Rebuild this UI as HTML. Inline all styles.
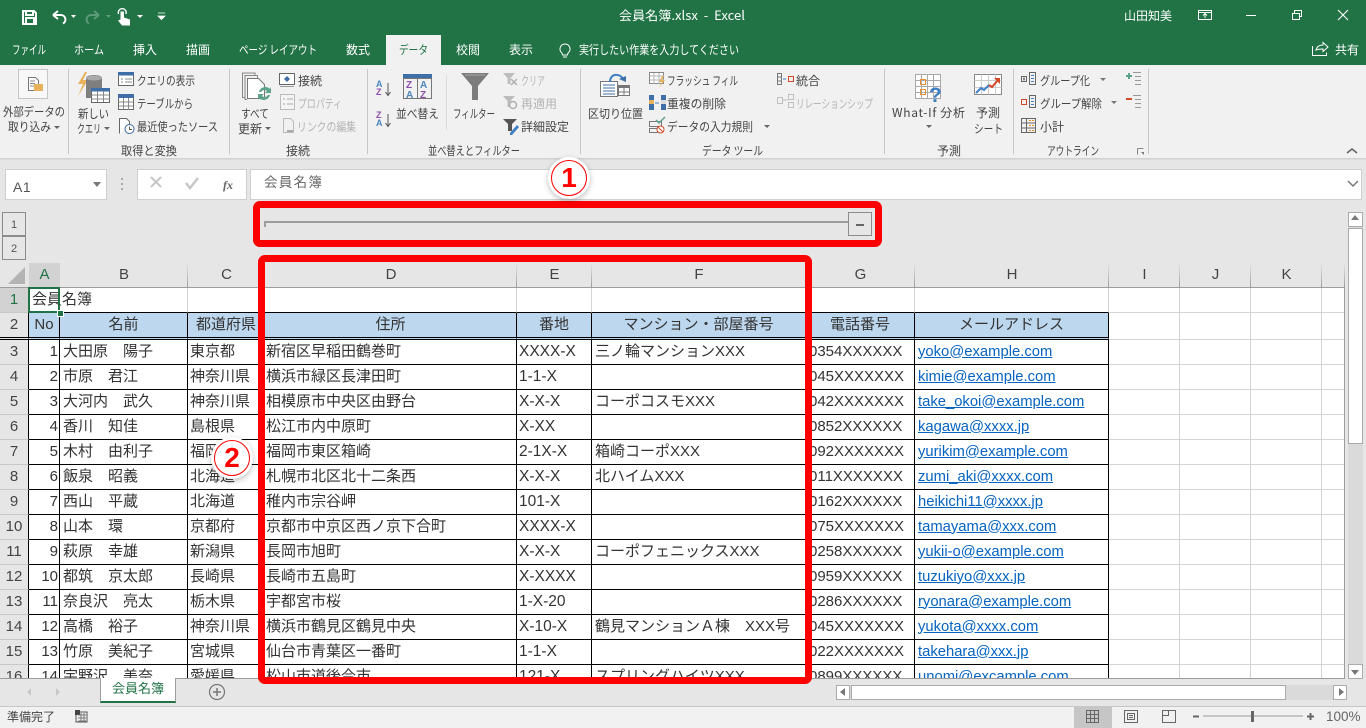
<!DOCTYPE html>
<html lang="ja"><head><meta charset="utf-8"><title>会員名簿.xlsx - Excel</title>
<style>
html,body{margin:0;padding:0;background:#e6e6e6}
body{width:1366px;height:728px;overflow:hidden;position:relative;font-family:"Liberation Sans","Noto Sans CJK JP",sans-serif}
.abs{position:absolute}
#top{position:absolute;left:0;top:0}
#top text{font-family:"Noto Sans CJK JP","Liberation Sans",sans-serif;font-size:12px;fill:#444;white-space:pre}
#top text.w{fill:#fff}
#top text.g{fill:#b4b4b4}
#top text.m{text-anchor:middle}
#sheet{position:absolute;left:0;top:263px;width:1345px;height:415px;overflow:hidden;background:#fff}
table{border-collapse:separate;border-spacing:0;table-layout:fixed;width:1345px;font-family:"Liberation Sans","Noto Sans CJK JP",sans-serif;font-size:15px;color:#333}
td,th{box-sizing:border-box;height:25px;padding:0 0 1px 3px;overflow:hidden;white-space:nowrap;font-weight:normal;text-align:left;border-right:1px solid #000;border-bottom:1px solid #000;line-height:22px}
td:nth-child(4){padding-left:2px}
td:nth-child(5){padding-left:1px}
td:nth-child(6){padding-left:2px}
tr>*:first-child{background:#e6e6e6;text-align:center;padding:0;font-size:15px;color:#444;border-right:1px solid #000;border-bottom:1px solid #c8c8c8}
tr.h th{background:linear-gradient(#e6e6e6,#9c9c9c) right top/1px 100% no-repeat,#e6e6e6;text-align:center;padding:0;border:0;border-bottom:1px solid #9c9c9c;color:#444;font-size:15px}
td.g{border-right:1px solid #d4d4d4;border-bottom:1px solid #d4d4d4}
td.b{border-bottom-color:#000}
td.n{text-align:right;padding:0 1px 1px 0}
td.l{font-size:15.5px}
td.p{font-size:15px}
td.a{font-size:14.8px;color:#0563c1;text-decoration:underline}
td.c{text-align:center;padding:0;background:#bdd7ee;letter-spacing:0}
tr.r2 td{height:27px;border-bottom:3px double #000;line-height:24px}
tr.r2 td.g{border-bottom:1px solid #d4d4d4}
.red{position:absolute;box-sizing:border-box;border:7px solid #f00;border-radius:7px}
.circ{position:absolute;width:34px;height:34px;border-radius:50%;background:#fff;border:1.5px solid #f00;box-shadow:0 0 0 3px #fff,0 2px 6px 3px rgba(0,0,0,.25);color:#f00;font:bold 28px/34px "Liberation Sans",sans-serif;text-align:center;box-sizing:content-box}
.box{position:absolute;box-sizing:border-box;background:#fff;border:1px solid #ababab}
</style></head><body>

<svg id="top" width="1366" height="728" viewBox="0 0 1366 728" xmlns="http://www.w3.org/2000/svg">
<rect width="1366" height="65" fill="#217346"/>
<rect x="386" y="35" width="55" height="31" fill="#f1f1f1"/>
<rect y="65" width="1366" height="93" fill="#f1f1f1"/>
<rect y="158" width="1366" height="1.5" fill="#d2d2d2"/>

<!-- QAT -->
<path d="M23 11h11l2 2v11H23zM26 11v4h7v-4M26 24v-6h8v6" fill="none" stroke="#fff" stroke-width="2"/>
<path d="M53 15l5-4M53 15l5 4M53 15h8a4.500 4.500 0 0 1 2 8.500" fill="none" stroke="#fff" stroke-width="2"/>
<path d="M71 15h5l-2.500 3z" fill="#fff"/>
<path d="M99 15l-5-4M99 15l-5 4M99 15h-8a4.500 4.500 0 0 0-2 8.500" fill="none" stroke="#5c9a7a" stroke-width="2"/>
<path d="M106 15h5l-2.500 3z" fill="#5c9a7a"/>
<path d="M120.500 11.500h3.500v6l6 2v6h-8l-4-5 2.500-1z" fill="#fff"/>
<path d="M118.500 14a4 4 0 1 1 7.500 0" fill="none" stroke="#fff" stroke-width="1.300"/>
<path d="M137 15h6l-3 3z" fill="#fff"/>
<path d="M158 13h7M158 16h7l-3.500 3.500z" fill="#fff" stroke="#fff" stroke-width=".8"/>

<!-- Title -->
<text class="w" x="619" y="20" style="font-size:12.500px" textLength="126" lengthAdjust="spacingAndGlyphs">会員名簿.xlsx  -  Excel</text>
<text class="w" x="1124" y="20">山田知美</text>
<path d="M1198.500 10.500h13v9h-13zM1198.500 12.500h13M1205 18v-4M1203 15.500l2-2 2 2" fill="none" stroke="#fff"/>
<path d="M1246 15.500h10" stroke="#fff"/>
<path d="M1292.500 13.500h7v6h-7zM1294.500 13.500v-3h7v6h-2" fill="none" stroke="#fff"/>
<path d="M1338 10l10 10M1348 10l-10 10" stroke="#fff" stroke-width="1.100"/>

<!-- Tabs -->
<text class="w" x="12" y="54" textLength="34" lengthAdjust="spacingAndGlyphs">ファイル</text>
<text class="w" x="74" y="54" textLength="30" lengthAdjust="spacingAndGlyphs">ホーム</text>
<text class="w" x="133" y="54">挿入</text>
<text class="w" x="186" y="54">描画</text>
<text class="w" x="239" y="54" textLength="78" lengthAdjust="spacingAndGlyphs">ページ レイアウト</text>
<text class="w" x="346" y="54">数式</text>
<text x="399" y="54" style="fill:#217346" textLength="29" lengthAdjust="spacingAndGlyphs">データ</text>
<text class="w" x="456" y="54">校閲</text>
<text class="w" x="509" y="54">表示</text>
<text class="w" x="579" y="54" textLength="160" lengthAdjust="spacingAndGlyphs">実行したい作業を入力してください</text>
<text class="w" x="1335" y="54">共有</text>
<path d="M565 44a5 5 0 0 1 3 9l-.5 2h-5l-.5-2a5 5 0 0 1 3-9zM563 57h4" fill="none" stroke="#fff"/>
<path d="M1312.500 46v9.500h14v-3M1316 50c1-4 4-5 7-5v-2.500l5 4.500-5 4.500V49c-3 0-5 0-7 1z" fill="none" stroke="#fff"/>

<!-- Group dividers -->
<g fill="#c6c6c6"><rect x="68" y="69" width="1" height="85"/><rect x="229" y="69" width="1" height="85"/><rect x="367" y="69" width="1" height="85"/><rect x="580" y="69" width="1" height="85"/><rect x="884" y="69" width="1" height="85"/><rect x="1013" y="69" width="1" height="85"/><rect x="1148" y="69" width="1" height="85"/><rect x="446" y="75" width="1" height="55" fill="#dcdcdc"/></g>

<!-- 外部データ -->
<rect x="18.500" y="69.500" width="29" height="29" fill="#f8f8f8" stroke="#c6c6c6"/>
<path d="M28.500 77.500h7l3 3v10h-10z" fill="#fff" stroke="#777"/>
<path d="M30 81h5M30 83.500h5M30 86h5" stroke="#888"/>
<path d="M34 84h9v7h-9z" fill="#e8b25c"/>
<text x="3" y="116" textLength="62" lengthAdjust="spacingAndGlyphs">外部データの</text>
<text x="8" y="131" textLength="43" lengthAdjust="spacingAndGlyphs">取り込み</text>
<path d="M54 126h6l-3 3z" fill="#666"/>

<!-- 取得と変換 -->
<path d="M85 72l-7 12h5l-5 12 10-16h-5l4-8z" fill="#e8b25c"/>
<path d="M86 78c0-4 16-4 16 0v20H86z" fill="#7f7f7f"/>
<ellipse cx="94" cy="78" rx="8" ry="2.500" fill="#aaa"/>
<rect x="91.500" y="88.500" width="18" height="14" fill="#fff" stroke="#666"/>
<rect x="91" y="88" width="19" height="3.500" fill="#3e6fa8"/>
<path d="M91.500 95h18M91.500 99h18M97.500 91v11M103.500 91v11" stroke="#888" fill="none"/>
<text x="78" y="118" textLength="31" lengthAdjust="spacingAndGlyphs">新しい</text>
<text x="77" y="133" textLength="24" lengthAdjust="spacingAndGlyphs">クエリ</text>
<path d="M104 127h6l-3 3z" fill="#666"/>
<rect x="118.500" y="73.500" width="15" height="12" fill="#fff" stroke="#666"/><rect x="118" y="72" width="16" height="3.500" fill="#3e6fa8"/><path d="M125 79h7M125 82h7M121 79h2M121 82h2" stroke="#888"/>
<rect x="118.500" y="96.500" width="15" height="13" fill="#fff" stroke="#666"/><rect x="118" y="94" width="16" height="4" fill="#3e6fa8"/><path d="M118.500 102h15M118.500 106h15M123.500 98v12M128.500 98v12" stroke="#888"/>
<path d="M119.500 133.500v-15h7l3 3v4" fill="#fff" stroke="#666"/><circle cx="129.500" cy="129" r="4.500" fill="#fff" stroke="#3e6fa8"/><path d="M129.500 126.500v3h2.500" stroke="#555" fill="none"/>
<text x="137" y="85" textLength="58" lengthAdjust="spacingAndGlyphs">クエリの表示</text>
<text x="137" y="108" textLength="56" lengthAdjust="spacingAndGlyphs">テーブルから</text>
<text x="137" y="131" textLength="81" lengthAdjust="spacingAndGlyphs">最近使ったソース</text>
<text x="121" y="155" textLength="56" lengthAdjust="spacingAndGlyphs">取得と変換</text>

<!-- 接続 -->
<path d="M242 73h13v3" fill="none" stroke="#888"/><path d="M244.500 75.500h13v3" fill="none" stroke="#888"/>
<path d="M242.500 73.500v24h2M245 75.500v24h2" fill="none" stroke="#888"/>
<path d="M247.500 78.500h11l6 6v14h-17z" fill="#fff" stroke="#777"/>
<path d="M259 92a6.500 6.500 0 0 1 11-3l1-2v6h-6l2-2a4 4 0 0 0-6 1zM270 95a6.500 6.500 0 0 1-11 3l-1 2v-6h6l-2 2a4 4 0 0 0 6-1z" fill="#5da28a"/>
<text x="241" y="118" textLength="28" lengthAdjust="spacingAndGlyphs">すべて</text>
<text x="238" y="133">更新</text>
<path d="M265 127h6l-3 3z" fill="#666"/>
<rect x="279.500" y="73.500" width="15" height="11" fill="#fff" stroke="#666"/><path d="M287 76l3 3-3 3-3-3z" fill="#3e6fa8"/><path d="M280 86.500h14" stroke="#999"/>
<rect x="280.500" y="94.500" width="14" height="15" fill="#f4f4f4" stroke="#bbb"/><path d="M283 99h2M283 104h2M287 99h6M287 104h6" stroke="#aaa"/>
<path d="M283.500 132.500v-14h7l3 3v11z" fill="none" stroke="#bbb"/><path d="M287 131h6" stroke="#aaa" stroke-width="2"/>
<text x="298" y="85">接続</text>
<text class="g" x="298" y="108" textLength="44" lengthAdjust="spacingAndGlyphs">プロパティ</text>
<text class="g" x="297" y="131" textLength="59" lengthAdjust="spacingAndGlyphs">リンクの編集</text>
<text x="286" y="155">接続</text>

<!-- 並べ替え -->
<text x="376" y="87" style="font:bold 9px 'Liberation Sans';fill:#4a86c0">A</text><text x="376" y="95" style="font:bold 9px 'Liberation Sans';fill:#8c4ea8">Z</text>
<text x="376" y="118" style="font:bold 9px 'Liberation Sans';fill:#8c4ea8">Z</text><text x="376" y="126" style="font:bold 9px 'Liberation Sans';fill:#4a86c0">A</text>
<text x="406" y="88" style="font:bold 10px 'Liberation Sans';fill:#8c4ea8">Z</text><text x="420" y="88" style="font:bold 10px 'Liberation Sans';fill:#4a86c0">A</text>
<text x="406" y="98" style="font:bold 10px 'Liberation Sans';fill:#4a86c0">A</text><text x="420" y="98" style="font:bold 10px 'Liberation Sans';fill:#8c4ea8">Z</text>
<path d="M388 83v12M385.500 92l2.500 3.500 2.500-3.500M388 114v12M385.500 123l2.500 3.500 2.500-3.500" fill="none" stroke="#555"/>
<rect x="403.500" y="78.500" width="28" height="20" fill="none" stroke="#777"/><rect x="403" y="74" width="29" height="4" fill="#3e6fa8"/><path d="M417.500 78v20" stroke="#777"/>
<text x="396" y="118" textLength="43" lengthAdjust="spacingAndGlyphs">並べ替え</text>
<path d="M461 73h28l-11 13v14h-6V86z" fill="#7c7c7c"/><path d="M465 75h20" stroke="#aaa"/>
<text x="453" y="118" textLength="42" lengthAdjust="spacingAndGlyphs">フィルター</text>
<path d="M503 73h12l-4.500 5v6h-3v-6z" fill="#bdbdbd"/><path d="M511 79l6 6M517 79l-6 6" stroke="#b0b0b0" stroke-width="1.500"/>
<path d="M503 96h12l-4.500 5v6h-3v-6z" fill="#bdbdbd"/><circle cx="513" cy="105" r="3.500" fill="none" stroke="#b0b0b0" stroke-width="1.500"/>
<path d="M503 119h14l-5 5v7h-4v-7z" fill="#555"/><path d="M510 133l7-8 2 2-7 8h-2z" fill="#3e7fc4"/>
<text class="g" x="521" y="85" textLength="24" lengthAdjust="spacingAndGlyphs">クリア</text>
<text class="g" x="521" y="108">再適用</text>
<text x="521" y="131">詳細設定</text>
<text x="428" y="155" textLength="92" lengthAdjust="spacingAndGlyphs">並べ替えとフィルター</text>

<!-- データツール -->
<rect x="600.500" y="81.500" width="17" height="15" fill="#fff" stroke="#777"/>
<path d="M603 85h12M603 88h12M603 91h12M603 94h12" stroke="#3e6fa8"/>
<rect x="618.500" y="85.500" width="11" height="10" fill="#fff" stroke="#777"/><rect x="619" y="85" width="11" height="3" fill="#777"/><path d="M624 88v8M619 92h10" stroke="#777"/>
<path d="M610 82c0-9 10-9 13-3" fill="none" stroke="#3e7fc4" stroke-width="2"/><path d="M619 79l7 3 0-6z" fill="#3e6fa8"/>
<text x="588" y="118" textLength="55" lengthAdjust="spacingAndGlyphs">区切り位置</text>
<rect x="649.500" y="72.500" width="14" height="11" fill="#fff" stroke="#888"/><path d="M650 76h14M650 80h14M654 73v11M659 73v11" stroke="#b5b5b5"/><path d="M662 76l-3 6h3l-3 6 6-8h-3l2-4z" fill="#e8b25c"/>
<rect x="649" y="95" width="5" height="15" fill="#3e6fa8"/><rect x="649" y="100" width="5" height="4" fill="#e8b25c"/><rect x="661" y="95" width="5" height="15" fill="#3e6fa8"/><rect x="661" y="100" width="5" height="4" fill="#ddd"/><path d="M655 103h4" stroke="#3e7fc4"/>
<path d="M649.500 121.500h12v5h-12zM649.500 128.500h8v4h-8z" fill="none" stroke="#777"/><path d="M656 120l3 3 6-6" fill="none" stroke="#5da28a" stroke-width="1.500"/><circle cx="660.500" cy="129.500" r="3.500" fill="#fff" stroke="#d2492a"/><path d="M658 127l5 5" stroke="#d2492a"/>
<text x="667" y="85" textLength="71" lengthAdjust="spacingAndGlyphs">フラッシュ フィル</text>
<text x="667" y="108" textLength="59" lengthAdjust="spacingAndGlyphs">重複の削除</text>
<text x="667" y="131" textLength="86" lengthAdjust="spacingAndGlyphs">データの入力規則</text>
<path d="M764 125h6l-3 3z" fill="#666"/>
<path d="M777.500 73.500h4v11h-4zM777.500 77h4M777.500 81h4" fill="none" stroke="#777"/><path d="M783 79h3" stroke="#3e7fc4"/><rect x="788.500" y="76.500" width="5" height="5" fill="none" stroke="#d2492a"/>
<path d="M777.500 97.500h5v6h-5zM788.500 94.500h5v5h-5zM788.500 102.500h5v5h-5zM783 100h5" fill="none" stroke="#c0c0c0"/>
<text x="796" y="85">統合</text>
<text class="g" x="796" y="108" textLength="77" lengthAdjust="spacingAndGlyphs">リレーションシップ</text>
<text x="702" y="155" textLength="61" lengthAdjust="spacingAndGlyphs">データ ツール</text>

<!-- 予測 -->
<g fill="none" stroke="#a8a8a8"><rect x="915.500" y="74.500" width="25" height="24" fill="#fff"/><path d="M915.500 80.500h25M915.500 86.500h25M915.500 92.500h25M921.500 74.500v24M927.500 74.500v24M933.500 74.500v24"/></g>
<rect x="920.500" y="79.500" width="5" height="5" fill="none" stroke="#e8912c"/><rect x="920.500" y="89.500" width="5" height="5" fill="none" stroke="#e8912c"/>
<text x="929" y="102" style="font:bold 21px 'Liberation Sans';fill:#3e7fc4">?</text>
<text x="892" y="117" textLength="73" lengthAdjust="spacing">What-If 分析</text>
<path d="M926 125h6l-3 3z" fill="#666"/>
<rect x="974.500" y="74.500" width="27" height="20" fill="#fff" stroke="#888"/><path d="M974.500 80.500h27M974.500 87.500h27M981.500 74.500v20M988.500 74.500v20M995.500 74.500v20" stroke="#ccc"/>
<path d="M976 93l5-5 3 2 5-5" fill="none" stroke="#3e7fc4" stroke-width="2"/><path d="M989 85l3 2 6-7" fill="none" stroke="#d2492a" stroke-width="2"/><path d="M994 78h6v6z" fill="#d2492a"/>
<text x="976" y="117">予測</text>
<text x="974" y="133" textLength="29" lengthAdjust="spacingAndGlyphs">シート</text>
<text x="937" y="155">予測</text>

<!-- アウトライン -->
<g fill="none" stroke="#666"><rect x="1021.500" y="76.500" width="5" height="5"/><rect x="1029.500" y="72.500" width="6" height="12"/><path d="M1023 79h2M1024 77.500v3"/></g><path d="M1031 75.500h3M1031 78.500h3M1031 81.500h3" stroke="#3e7fc4"/>
<rect x="1021.500" y="99.500" width="5" height="5" fill="none" stroke="#d2492a"/><rect x="1029.500" y="95.500" width="6" height="12" fill="none" stroke="#666"/><path d="M1031 98.500h3M1031 101.500h3M1031 104.500h3" stroke="#3e7fc4"/>
<g fill="none" stroke="#666"><rect x="1021.500" y="118.500" width="14" height="14"/><path d="M1026.500 118v14M1021.500 123h14M1021.500 128h14"/></g><path d="M1029 120.500h5M1029 125.500h5M1029 130.500h5" stroke="#e8912c" stroke-dasharray="2 1"/>
<text x="1040" y="85" textLength="50" lengthAdjust="spacingAndGlyphs">グループ化</text>
<text x="1040" y="108" textLength="62" lengthAdjust="spacingAndGlyphs">グループ解除</text>
<text x="1040" y="131">小計</text>
<path d="M1100 78h6l-3 3z M1111 101h6l-3 3z" fill="#777"/>
<path d="M1126 76h6M1129 73v6" stroke="#5da28a" stroke-width="2"/><path d="M1133 72.500h8M1135 76.500h6M1135 80.500h6M1135 84.500h6" stroke="#999"/>
<path d="M1126 99h6" stroke="#d2492a" stroke-width="2"/><path d="M1133 95.500h8M1135 99.500h6M1135 103.500h6M1135 107.500h6" stroke="#999"/>
<text x="1047" y="155" textLength="52" lengthAdjust="spacingAndGlyphs">アウトライン</text>
<path d="M1137.500 148.500h6M1137.500 148.500v6" stroke="#888" fill="none"/><path d="M1140 151l4 4v-3h-3z" fill="#777"/>
<path d="M1347 153l5-4 5 4" fill="none" stroke="#666" stroke-width="1.600"/>
</svg>

<!-- Formula bar -->
<div class="box" style="left:5px;top:169px;width:102px;height:31px;border-color:#cfcfcf"></div>
<div class="abs" style="left:13px;top:179px;font-size:14px;letter-spacing:.5px;color:#555">A1</div>
<div class="abs" style="left:93px;top:182px;width:0;height:0;border:4px solid transparent;border-top:5px solid #777"></div>
<div class="abs" style="left:121px;top:178px;width:2px;height:2px;background:#aaa;box-shadow:0 5px #aaa,0 10px #aaa"></div>
<div class="box" style="left:137px;top:169px;width:110px;height:31px;border-color:#cfcfcf"></div>
<svg class="abs" style="left:137px;top:169px" width="110" height="31"><path d="M14 8l10 10M24 8L14 18" stroke="#c6c6c6" stroke-width="2"/><path d="M49 14l4 5 8-10" fill="none" stroke="#c6c6c6" stroke-width="2.500"/><text x="86" y="20" style="font:italic bold 12px 'Liberation Serif';fill:#666">fx</text></svg>
<div class="box" style="left:250px;top:169px;width:1112px;height:31px;border-color:#cfcfcf"></div>
<div class="abs" style="left:264px;top:173px;font-size:13.500px;letter-spacing:1.300px;line-height:20px;color:#666;font-family:'Liberation Sans','Noto Sans CJK JP',sans-serif">会員名簿</div>
<svg class="abs" style="left:1346px;top:178px" width="14" height="12"><path d="M2 3l5 5 5-5" fill="none" stroke="#777" stroke-width="1.500"/></svg>

<!-- Outline area -->
<div class="abs" style="left:2px;top:212px;width:24px;height:24px;box-sizing:border-box;border:1px solid #8c8c8c;font-size:11px;line-height:24px;text-align:center;color:#555">1</div>
<div class="abs" style="left:2px;top:236px;width:24px;height:24px;box-sizing:border-box;border:1px solid #8c8c8c;font-size:11px;line-height:24px;text-align:center;color:#555">2</div>
<div class="abs" style="left:264px;top:221px;width:584px;height:2px;background:#9c9c9c"></div>
<div class="abs" style="left:264px;top:221px;width:2px;height:6px;background:#9c9c9c"></div>
<div class="abs" style="left:848px;top:212px;width:24px;height:24px;box-sizing:border-box;border:1px solid #8c8c8c"></div>
<div class="abs" style="left:856px;top:224px;width:8px;height:2px;background:#666"></div>

<!-- Grid -->
<div id="sheet">
<table>
<colgroup><col style="width:29px"><col style="width:31px"><col style="width:128px"><col style="width:77px"><col style="width:252px"><col style="width:75px"><col style="width:214px"><col style="width:109px"><col style="width:194px"><col style="width:71px"><col style="width:71px"><col style="width:71px"><col style="width:23px"></colgroup>
<tr class="h"><th style="background:#e6e6e6"></th><th style="background:#d2d2d2;color:#217346">A</th><th>B</th><th>C</th><th>D</th><th>E</th><th>F</th><th>G</th><th>H</th><th>I</th><th>J</th><th>K</th><th></th></tr>
<tr><td style="background:#d2d2d2;color:#217346;border-right-color:#9c9c9c">1</td><td class="g b" style="overflow:visible">会員名簿</td><td class="g b"></td><td class="g b"></td><td class="g b"></td><td class="g b"></td><td class="g b"></td><td class="g b"></td><td class="g b"></td><td class="g"></td><td class="g"></td><td class="g"></td><td class="g"></td></tr>
<tr class="r2"><td>2</td><td class="c">No</td><td class="c">名前</td><td class="c">都道府県</td><td class="c">住所</td><td class="c">番地</td><td class="c">マンション・部屋番号</td><td class="c">電話番号</td><td class="c">メールアドレス</td><td class="g"></td><td class="g"></td><td class="g"></td><td class="g"></td></tr>
<tr><td>3</td><td class="n">1</td><td>大田原　陽子</td><td>東京都</td><td>新宿区早稲田鶴巻町</td><td class="l">XXXX-X</td><td>三ノ輪マンションXXX</td><td class="p">0354XXXXXX</td><td class="a">yoko@example.com</td><td class="g"></td><td class="g"></td><td class="g"></td><td class="g"></td></tr>
<tr><td>4</td><td class="n">2</td><td>市原　君江</td><td>神奈川県</td><td>横浜市緑区長津田町</td><td class="l">1-1-X</td><td></td><td class="p">045XXXXXXX</td><td class="a">kimie@example.com</td><td class="g"></td><td class="g"></td><td class="g"></td><td class="g"></td></tr>
<tr><td>5</td><td class="n">3</td><td>大河内　武久</td><td>神奈川県</td><td>相模原市中央区由野台</td><td class="l">X-X-X</td><td>コーポコスモXXX</td><td class="p">042XXXXXXX</td><td class="a">take_okoi@example.com</td><td class="g"></td><td class="g"></td><td class="g"></td><td class="g"></td></tr>
<tr><td>6</td><td class="n">4</td><td>香川　知佳</td><td>島根県</td><td>松江市内中原町</td><td class="l">X-XX</td><td></td><td class="p">0852XXXXXX</td><td class="a">kagawa@xxxx.jp</td><td class="g"></td><td class="g"></td><td class="g"></td><td class="g"></td></tr>
<tr><td>7</td><td class="n">5</td><td>木村　由利子</td><td>福岡県</td><td>福岡市東区箱崎</td><td class="l">2-1X-X</td><td>箱崎コーポXXX</td><td class="p">092XXXXXXX</td><td class="a">yurikim@example.com</td><td class="g"></td><td class="g"></td><td class="g"></td><td class="g"></td></tr>
<tr><td>8</td><td class="n">6</td><td>飯泉　昭義</td><td>北海道</td><td>札幌市北区北十二条西</td><td class="l">X-X-X</td><td>北ハイムXXX</td><td class="p">011XXXXXXX</td><td class="a">zumi_aki@xxxx.com</td><td class="g"></td><td class="g"></td><td class="g"></td><td class="g"></td></tr>
<tr><td>9</td><td class="n">7</td><td>西山　平蔵</td><td>北海道</td><td>稚内市宗谷岬</td><td class="l">101-X</td><td></td><td class="p">0162XXXXXX</td><td class="a">heikichi11@xxxx.jp</td><td class="g"></td><td class="g"></td><td class="g"></td><td class="g"></td></tr>
<tr><td>10</td><td class="n">8</td><td>山本　環</td><td>京都府</td><td>京都市中京区西ノ京下合町</td><td class="l">XXXX-X</td><td></td><td class="p">075XXXXXXX</td><td class="a">tamayama@xxx.com</td><td class="g"></td><td class="g"></td><td class="g"></td><td class="g"></td></tr>
<tr><td>11</td><td class="n">9</td><td>萩原　幸雄</td><td>新潟県</td><td>長岡市旭町</td><td class="l">X-X-X</td><td>コーポフェニックスXXX</td><td class="p">0258XXXXXX</td><td class="a">yukii-o@example.com</td><td class="g"></td><td class="g"></td><td class="g"></td><td class="g"></td></tr>
<tr><td>12</td><td class="n">10</td><td>都筑　京太郎</td><td>長崎県</td><td>長崎市五島町</td><td class="l">X-XXXX</td><td></td><td class="p">0959XXXXXX</td><td class="a">tuzukiyo@xxx.jp</td><td class="g"></td><td class="g"></td><td class="g"></td><td class="g"></td></tr>
<tr><td>13</td><td class="n">11</td><td>奈良沢　亮太</td><td>栃木県</td><td>宇都宮市桜</td><td class="l">1-X-20</td><td></td><td class="p">0286XXXXXX</td><td class="a">ryonara@example.com</td><td class="g"></td><td class="g"></td><td class="g"></td><td class="g"></td></tr>
<tr><td>14</td><td class="n">12</td><td>高橋　裕子</td><td>神奈川県</td><td>横浜市鶴見区鶴見中央</td><td class="l">X-10-X</td><td>鶴見マンションＡ棟　XXX号</td><td class="p">045XXXXXXX</td><td class="a">yukota@xxxx.com</td><td class="g"></td><td class="g"></td><td class="g"></td><td class="g"></td></tr>
<tr><td>15</td><td class="n">13</td><td>竹原　美紀子</td><td>宮城県</td><td>仙台市青葉区一番町</td><td class="l">1-1-X</td><td></td><td class="p">022XXXXXXX</td><td class="a">takehara@xxx.jp</td><td class="g"></td><td class="g"></td><td class="g"></td><td class="g"></td></tr>
<tr><td>16</td><td class="n">14</td><td>宇野沢　美奈</td><td>愛媛県</td><td>松山市道後今市</td><td class="l">121-X</td><td>スプリングハイツXXX</td><td class="p">0899XXXXXX</td><td class="a">unomi@excample.com</td><td class="g"></td><td class="g"></td><td class="g"></td><td class="g"></td></tr>
</table>
</div>
<div class="abs" style="left:1344px;top:287px;width:1px;height:391px;background:#9c9c9c"></div>
<div class="abs" style="left:0;top:678px;width:1345px;height:1px;background:#9c9c9c"></div>
<svg class="abs" style="left:8px;top:267px" width="20" height="20"><path d="M17 0v17H0z" fill="#b4b4b4"/></svg>

<!-- A1 selection -->
<div class="abs" style="left:28px;top:287px;width:32px;height:26px;box-sizing:border-box;border:2px solid #217346"></div>
<div class="abs" style="left:57px;top:310px;width:5px;height:5px;background:#217346;border:1px solid #fff"></div>

<!-- Vertical scrollbar -->
<div class="abs" style="left:1348px;top:212px;width:15px;height:467px;background:#dadada"></div>
<div class="box" style="left:1348px;top:212px;width:15px;height:15px"></div>
<div class="box" style="left:1348px;top:228px;width:15px;height:216px"></div>
<div class="box" style="left:1348px;top:664px;width:15px;height:15px"></div>
<div class="abs" style="left:1351px;top:215px;width:0;height:0;border:4px solid transparent;border-bottom:5px solid #777;border-top:0"></div>
<div class="abs" style="left:1351px;top:670px;width:0;height:0;border:4px solid transparent;border-top:5px solid #777;border-bottom:0"></div>

<!-- Sheet tabs -->
<div class="abs" style="left:0;top:679px;width:1366px;height:27px;background:#e6e6e6"></div>
<div class="abs" style="left:100px;top:678px;width:76px;height:25px;box-sizing:border-box;background:#fff;border:1px solid #9c9c9c;border-top:0;border-bottom:2px solid #217346;color:#217346;font-size:13px;line-height:22px;text-align:center">会員名簿</div>
<svg class="abs" style="left:20px;top:682px" width="220" height="22"><path d="M11 6l-4 4 4 4zM36 6l4 4-4 4z" fill="#c8c8c8"/><circle cx="197" cy="10" r="7.500" fill="none" stroke="#777" stroke-width="1.200"/><path d="M197 6v8M193 10h8" stroke="#777" stroke-width="1.500"/></svg>
<div class="abs" style="left:836px;top:685px;width:510px;height:15px;background:#dadada"></div>
<div class="box" style="left:836px;top:685px;width:14px;height:15px"></div>
<div class="box" style="left:851px;top:685px;width:435px;height:15px"></div>
<div class="box" style="left:1333px;top:685px;width:14px;height:15px"></div>
<div class="abs" style="left:840px;top:688px;width:0;height:0;border:4px solid transparent;border-right:5px solid #777;border-left:0"></div>
<div class="abs" style="left:1339px;top:688px;width:0;height:0;border:4px solid transparent;border-left:5px solid #777;border-right:0"></div>

<!-- Red annotations -->
<div class="red" style="left:253px;top:201px;width:629px;height:46px"></div>
<div class="red" style="left:258px;top:255px;width:554px;height:429px"></div>
<div class="circ" style="left:551px;top:160px">1</div>
<div class="circ" style="left:214px;top:440px">2</div>

<!-- Status bar -->
<div class="abs" style="left:0;top:706px;width:1366px;height:22px;background:#f1f1f1;border-top:1px solid #c6c6c6;box-sizing:border-box"></div>
<div class="abs" style="left:7px;top:709px;font-size:12px;line-height:17px;color:#444">準備完了</div>
<div class="abs" style="left:1074px;top:707px;width:38px;height:21px;background:#c6c6c6"></div>
<svg class="abs" style="left:0;top:706px" width="1366" height="22">
<rect x="76" y="6" width="11" height="10" fill="none" stroke="#555"/><rect x="75" y="4" width="5" height="5" fill="#444"/><path d="M78 9h8M78 12h8M78 15h8M81 7v9M84 7v9" stroke="#777"/>
<path d="M1086.500 4.500h12v12h-12zM1086.500 8.500h12M1086.500 12.500h12M1090.500 4.500v12M1094.500 4.500v12" fill="none" stroke="#666"/>
<path d="M1124.500 4.500h13v12h-13zM1127.500 7.500h7v6h-7zM1129 9.500h4M1129 11.500h4" fill="none" stroke="#666"/>
<path d="M1162.500 4.500h13v12h-13zM1168.500 4.500v5h-6" fill="none" stroke="#666"/>
<path d="M1193 10.500h6" stroke="#666" stroke-width="2"/><rect x="1203" y="9.500" width="100" height="1" fill="#999"/><rect x="1251" y="5" width="3" height="11" fill="#666"/><path d="M1307 10.500h7M1310.500 7v7" stroke="#666" stroke-width="2"/>
<text x="1326" y="15" style="font:13.500px 'Liberation Sans';fill:#666">100%</text>
</svg>
</body></html>
